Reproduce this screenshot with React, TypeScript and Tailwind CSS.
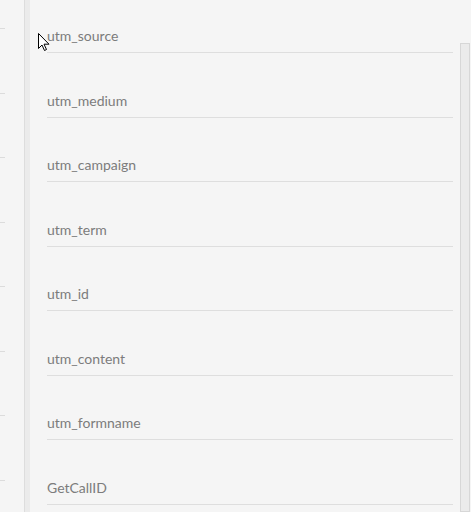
import React from "react";

const fields = [
  "utm_source",
  "utm_medium",
  "utm_campaign",
  "utm_term",
  "utm_id",
  "utm_content",
  "utm_formname",
  "GetCallID",
];

export default function App() {
  return (
    <div
      className="relative flex w-[471px] h-[512px] overflow-hidden bg-[#f5f5f5]"
      style={{ fontFamily: 'Lato, "Open Sans", sans-serif' }}
    >
      {/* left panel with ticks */}
      <div className="w-[24px] shrink-0 flex flex-col pt-[28px]">
        {Array.from({ length: 8 }).map((_, i) => (
          <div key={i} className="h-[64.5px] shrink-0">
            <div className="w-[5px] h-px bg-[#dcdcdc]" />
          </div>
        ))}
      </div>
      {/* divider */}
      <div className="w-[6px] shrink-0 border-l border-[#dddddd] bg-[#ebebeb]" />
      {/* content */}
      <div className="flex-1 flex flex-col pl-[17px] pr-[7px] mt-[-11.5px]">
        {fields.map((f) => (
          <div
            key={f}
            className="h-[64.5px] shrink-0 flex flex-col justify-end border-b border-[#dedede]"
          >
            <div className="text-[14px] leading-[20px] text-[#7c7c7c] pb-[6px]">{f}</div>
          </div>
        ))}
      </div>
      {/* scrollbar */}
      <div className="w-[11px] shrink-0 pt-[43px] pr-[1px]">
        <div className="h-full border border-[#d7d7d7] bg-[#ebebeb]" />
      </div>
      {/* mouse cursor */}
      <svg
        className="absolute left-[38px] top-[33px]"
        width="13"
        height="19"
        viewBox="0 0 13 19"
      >
        <path
          d="M0.5 0.5 L0.5 15.5 L4 12 L6.5 17.5 L8.5 16.5 L6 11.2 L11 11.2 Z"
          fill="#ffffff"
          stroke="#000000"
          strokeWidth="1"
          strokeLinejoin="miter"
        />
      </svg>
    </div>
  );
}
